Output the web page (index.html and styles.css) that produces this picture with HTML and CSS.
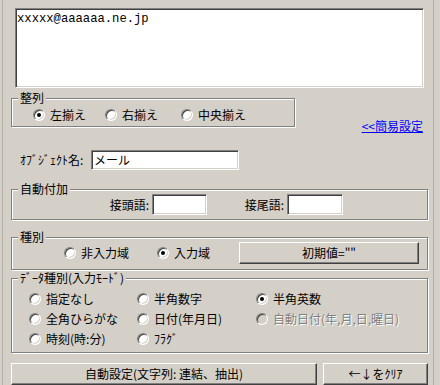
FILE: index.html
```html
<!DOCTYPE html>
<html lang="ja">
<head>
<meta charset="utf-8">
<link rel="stylesheet" href="styles.css">
</head>
<body>
<div class="frame">
  <div class="memo">xxxxx@aaaaaa.ne.jp</div>

  <div class="row-align">
    <div class="group g-align">
      <div class="title">整列</div>
      <div class="radios">
        <span class="opt o-left"><span class="radio on"></span>左揃え</span>
        <span class="opt o-right"><span class="radio"></span>右揃え</span>
        <span class="opt"><span class="radio"></span>中央揃え</span>
      </div>
    </div>
    <a class="link" href="#">&lt;&lt;簡易設定</a>
  </div>

  <div class="objrow">
    <span class="objlabel">ｵﾌﾞｼﾞｪｸﾄ名:</span>
    <span class="field f-obj">メール</span>
  </div>

  <div class="group g-auto">
    <div class="title">自動付加</div>
    <div class="autorow">
      <span class="lbl l-pre">接頭語:</span>
      <span class="field f-pre"></span>
      <span class="lbl l-suf">接尾語:</span>
      <span class="field f-suf"></span>
    </div>
  </div>

  <div class="group g-kind">
    <div class="title">種別</div>
    <div class="kindrow">
      <span class="opt k1"><span class="radio"></span>非入力域</span>
      <span class="opt k2"><span class="radio on"></span>入力域</span>
      <span class="btn b-init">初期値=""</span>
    </div>
  </div>

  <div class="group g-data">
    <div class="title">ﾃﾞｰﾀ種別(入力ﾓｰﾄﾞ)</div>
    <div class="datagrid">
      <span class="opt"><span class="radio"></span>指定なし</span>
      <span class="opt"><span class="radio"></span>半角数字</span>
      <span class="opt"><span class="radio on"></span>半角英数</span>
      <span class="opt"><span class="radio"></span>全角ひらがな</span>
      <span class="opt"><span class="radio"></span>日付(年月日)</span>
      <span class="opt disabled"><span class="radio"></span>自動日付(年,月,日,曜日)</span>
      <span class="opt"><span class="radio"></span>時刻(時:分)</span>
      <span class="opt"><span class="radio"></span>ﾌﾗｸﾞ</span>
    </div>
  </div>

  <div class="btnrow">
    <span class="btn b-auto">自動設定(文字列: 連結、抽出)</span>
    <span class="btn b-clear">←↓をｸﾘｱ</span>
  </div>
</div>
</body>
</html>
```

FILE: styles.css
```css
html, body {
  margin: 0;
  padding: 0;
  background: #d4d0c8;
}
body {
  font-family: "Noto Sans CJK JP", "Noto Sans", sans-serif;
  font-size: 12px;
  line-height: 14px;
  color: #000;
}
.frame {
  margin-left: 2px;
  width: 432px;
  height: 385px;
  padding-left: 8px;
  box-sizing: border-box;
  border-left: 1px solid #b3afa7;
  border-right: 1px solid #b3afa7;
  overflow: hidden;
}
.memo {
  margin: 8px 0 0 4px;
  width: 409px;
  height: 80px;
  box-sizing: border-box;
  background: #fff;
  border: 1px solid;
  border-color: #808080 #fff #fff #808080;
  box-shadow: inset 1px 1px 0 #404040, inset -1px -1px 0 #d4d0c8;
  padding: 3px 0 0 1px;
  font-family: "Liberation Mono", monospace;
  font-size: 12.2px;
  line-height: 14px;
}
.group {
  box-sizing: border-box;
  border: 1px solid #808080;
  box-shadow: inset 1px 1px 0 #fff, 1px 1px 0 #fff;
}
.title {
  display: table;
  margin: -7px 0 0 6px;
  padding: 0 2px;
  background: #d4d0c8;
  line-height: 12px;
  height: 12px;
  white-space: nowrap;
}
.row-align {
  display: flex;
  width: 412px;
  margin-top: 10px;
}
.g-align {
  width: 284px;
  height: 29px;
}
.radios {
  display: flex;
  align-items: center;
  height: 14px;
  margin-top: 4px;
  padding-left: 21px;
}
.opt {
  display: flex;
  align-items: center;
  white-space: nowrap;
  height: 14px;
}
.o-left { width: 72px; }
.o-right { width: 76px; }
.radio {
  position: relative;
  flex: none;
  width: 12px;
  height: 12px;
  box-sizing: border-box;
  border-radius: 50%;
  background: #fff;
  border: 1px solid;
  border-color: #808080 #fff #fff #808080;
  box-shadow: inset 1px 1px 0 #404040, inset -1px -1px 0 #d4d0c8;
  margin-right: 5px;
}
.radio.on::after {
  content: "";
  position: absolute;
  left: 3px;
  top: 3px;
  width: 4px;
  height: 4px;
  border-radius: 50%;
  background: #000;
}
.disabled {
  color: #808080;
  text-shadow: 1px 1px 0 #fff;
}
.disabled .radio {
  background: #d4d0c8;
}
.link {
  margin-left: auto;
  align-self: flex-start;
  margin-top: 21px;
  color: #0000ff;
  text-decoration: underline;
  line-height: 14px;
  white-space: nowrap;
}
.objrow {
  display: flex;
  align-items: center;
  margin-top: 17px;
  padding-left: 9px;
  height: 20px;
}
.objlabel {
  width: 71px;
  white-space: nowrap;
}
.field {
  display: block;
  box-sizing: border-box;
  background: #fff;
  border: 1px solid;
  border-color: #808080 #fff #fff #808080;
  box-shadow: inset 1px 1px 0 #404040, inset -1px -1px 0 #d4d0c8;
  padding: 2px 0 0 2px;
  line-height: 14px;
}
.f-obj { width: 148px; height: 20px; }
.g-auto {
  width: 417px;
  height: 31px;
  margin-top: 19px;
}
.autorow {
  display: flex;
  align-items: center;
  margin-top: -1px;
  height: 21px;
  padding-left: 88px;
}
.lbl {
  text-align: right;
  padding-right: 3px;
  box-sizing: border-box;
  white-space: nowrap;
}
.l-pre { width: 52px; }
.l-suf { width: 80px; }
.f-pre { width: 55px; height: 21px; }
.f-suf { width: 56px; height: 21px; }
.g-kind {
  width: 417px;
  height: 33px;
  margin-top: 17px;
}
.kindrow {
  display: flex;
  align-items: center;
  margin-top: -1px;
  height: 22px;
  padding-left: 52px;
}
.k1 { width: 93px; }
.k2 { width: 82px; }
.btn {
  display: flex;
  align-items: center;
  justify-content: center;
  box-sizing: border-box;
  height: 22px;
  border: 1px solid;
  border-color: #fff #404040 #404040 #fff;
  box-shadow: inset -1px -1px 0 #808080;
  white-space: nowrap;
  padding-bottom: 1px;
}
.b-init { width: 180px; }
.g-data {
  width: 417px;
  height: 75px;
  margin-top: 8px;
}
.datagrid {
  display: grid;
  grid-template-columns: 108px 119px auto;
  grid-auto-rows: 20px;
  align-items: center;
  margin-top: 5px;
  padding-left: 17px;
}
.btnrow {
  display: flex;
  gap: 6px;
  margin-top: 10px;
}
.b-auto { width: 306px; }
.b-clear { width: 105px; }
```
